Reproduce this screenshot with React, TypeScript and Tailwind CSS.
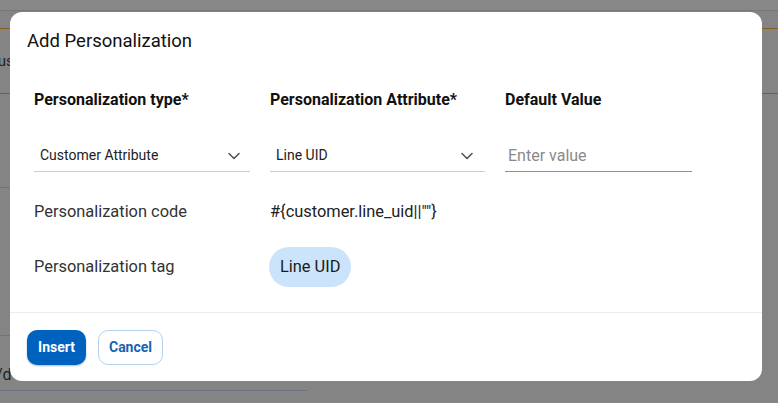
import React from "react";

const Chevron = () => (
  <svg width="12" height="8" viewBox="0 0 12 8" fill="none" className="shrink-0">
    <polyline points="1,1.5 6,6.5 11,1.5" stroke="#555" strokeWidth="1.6" strokeLinecap="round" strokeLinejoin="round" />
  </svg>
);

const App = () => {
  return (
    <div className="relative h-[403px] w-[778px] overflow-hidden bg-[#848484] font-['Roboto','Liberation_Sans',sans-serif]">
      {/* page behind the overlay */}
      <div className="flex flex-col">
        <div className="h-[11px] border-b border-[#767676] bg-[#888888]" />
        <div className="mt-[17px] h-[66px] border-y border-[#8a5a20]">
          <div className="flex h-full items-center overflow-hidden">
            <span className="-ml-[10px] text-[15px] text-[#222]">cus</span>
          </div>
        </div>
        <div className="mt-[93px] h-px w-[300px] bg-[#6e7580]" />
        <div className="mt-[147px] h-px w-[300px] bg-[#6e7580]" />
        <div className="flex h-[55px] w-[307px] items-center overflow-hidden border-b border-[#6b7280]">
          <span className="-ml-[4px] mt-[24px] text-[16px] text-[#222]">/d</span>
        </div>
      </div>

      {/* dialog */}
      <div className="absolute left-[10px] top-[12px] flex h-[369px] w-[752px] flex-col rounded-[12px] bg-white">
        <div className="flex h-[60px] items-center pl-[17px]">
          <h2 className="text-[18.5px] text-[#111]">Add Personalization</h2>
        </div>

        <div className="grid grid-cols-[216px_215px_187px] gap-x-5 px-6 pt-4">
          <div className="flex h-6 items-center text-[16px] font-bold text-[#111]">Personalization type*</div>
          <div className="flex h-6 items-center text-[16px] font-bold text-[#111]">Personalization Attribute*</div>
          <div className="flex h-6 items-center text-[16px] font-bold text-[#111]">Default Value</div>

          <div className="mt-7 flex h-8 items-center justify-between border-b border-[#b5d3ea] pl-[6px] pr-[10px] text-[14px] text-[#222]">
            <span>Customer Attribute</span>
            <Chevron />
          </div>
          <div className="mt-7 flex h-8 items-center justify-between border-b border-[#b5d3ea] pl-[6px] pr-[12px] text-[14px] text-[#222]">
            <span>Line UID</span>
            <Chevron />
          </div>
          <div className="mt-7 flex h-8 items-center border-b border-[#8f8f8f] pl-[3px]">
            <span className="text-[16px] text-[#8a8a8a]">Enter value</span>
          </div>

          <div className="mt-7 flex h-6 items-center text-[16.4px] text-[#333]">Personalization code</div>
          <div className="col-span-2 mt-7 flex h-6 items-center text-[16.4px] text-[#222]">#{"{"}customer.line_uid||""{"}"}</div>

          <div className="mt-[23px] flex h-10 items-center text-[16.4px] text-[#333]">Personalization tag</div>
          <div className="col-span-2 mt-[23px] flex h-10 items-center">
            <span className="-ml-px flex h-10 items-center rounded-full bg-[#cce4fb] px-[11px] text-[16.4px] text-[#1a1a1a]">Line UID</span>
          </div>
        </div>

        <div className="mt-auto border-t border-[#ececec] px-[17px] pb-4 pt-[17px]">
          <div className="flex gap-3">
            <button className="h-[35px] w-[59px] rounded-[10px] bg-[#0062bf] text-[14px] font-bold text-white shadow-[0_1px_2px_rgba(0,60,140,0.35)]">
              Insert
            </button>
            <button className="h-[35px] w-[65px] rounded-[10px] border border-[#b6d2ec] bg-white text-[14px] font-bold text-[#1565b5]">
              Cancel
            </button>
          </div>
        </div>
      </div>
    </div>
  );
};

export default App;
